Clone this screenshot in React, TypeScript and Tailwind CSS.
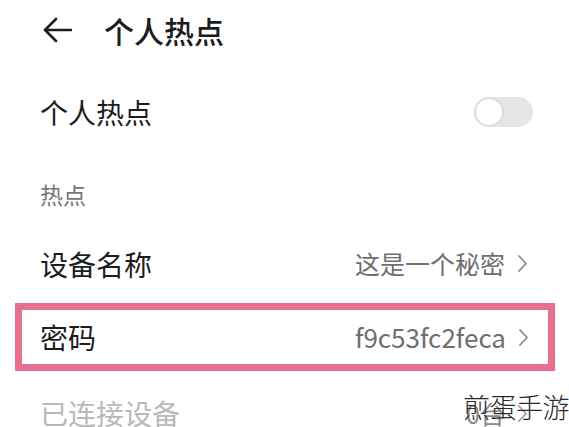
import React from 'react';

const Chevron: React.FC = () => (
  <svg width="11" height="19" viewBox="0 0 11 19" className="ml-3 shrink-0">
    <polyline points="2,2 9,9.5 2,17" fill="none" stroke="#8a8a8a" strokeWidth="1.8" strokeLinecap="round" strokeLinejoin="round" />
  </svg>
);

const Row: React.FC<{ label: string; value: string; className?: string; labelClass?: string; valueClass?: string }> = ({
  label,
  value,
  className = '',
  labelClass = 'text-[#1c1c1c]',
  valueClass = 'text-[25px]',
}) => (
  <div className={`flex items-center justify-between ${className}`}>
    <span className={`text-[28px] leading-none ${labelClass}`}>{label}</span>
    <span className={`flex items-center leading-none text-[#6e6e6e] ${valueClass}`}>
      {value}
      <Chevron />
    </span>
  </div>
);

export default function App() {
  return (
    <div
      className="relative w-[569px] h-[427px] overflow-hidden bg-white"
      style={{ fontFamily: '"Noto Sans CJK SC", "Noto Sans", sans-serif' }}
    >
      {/* Header */}
      <div className="flex items-center h-[60px] pl-[43px]">
        <svg width="29" height="26" viewBox="0 0 29 26">
          <path d="M28 13H3M13 2L2 13l11 11" fill="none" stroke="#1c1c1c" strokeWidth="2.6" strokeLinecap="round" strokeLinejoin="round" />
        </svg>
        <span className="ml-[32px] text-[30px] leading-none font-medium text-[#1c1c1c]">个人热点</span>
      </div>

      {/* Hotspot switch */}
      <div className="flex items-center justify-between h-[104px] pl-[40px] pr-[36px]">
        <span className="text-[28px] leading-none text-[#1c1c1c]">个人热点</span>
        <div className="flex items-center w-[59px] h-[30px] rounded-full bg-[#e6e6e6]">
          <div className="w-[30px] h-[30px] rounded-full bg-white border-2 border-[#dcdcdc]" />
        </div>
      </div>

      {/* Section label */}
      <div className="flex items-center h-[60px] pl-[40px]">
        <span className="text-[23px] leading-none text-[#777777]">热点</span>
      </div>

      <Row label="设备名称" value="这是一个秘密" className="h-[79px] pl-[40px] pr-[41px]" />

      {/* Highlighted password row */}
      <div className="mx-[15px] w-[540px] h-[68px] border-[7px] border-[#e8708f]">
        <Row label="密码" value="f9c53fc2feca" valueClass="text-[26px]" className="h-full pl-[18px] pr-[19px]" />
      </div>

      <Row
        label="已连接设备"
        value="0台"
        labelClass="text-[#a8a8a8]"
        className="h-[84px] pl-[40px] pr-[41px] opacity-80"
      />

      {/* Watermark */}
      <div className="absolute right-0 top-[393px] text-[27px] leading-none font-light text-[#2a2a2a] tracking-[-0.5px]">
        煎蛋手游
      </div>
    </div>
  );
}
